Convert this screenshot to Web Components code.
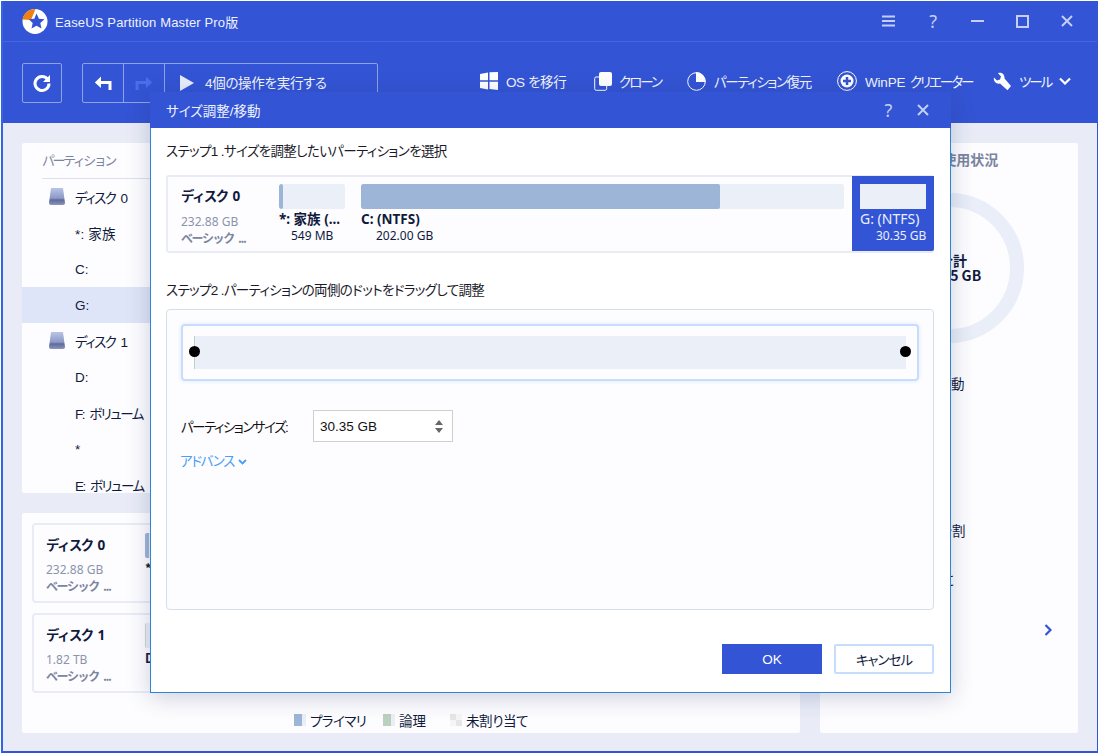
<!DOCTYPE html>
<html lang="ja"><head><meta charset="utf-8"><title>EaseUS</title>
<style>
html,body{margin:0;padding:0;background:#fff;width:1098px;height:754px;overflow:hidden;font-family:"Liberation Sans","Noto Sans CJK JP",sans-serif;font-size:13px;color:#101a3c}
</style></head><body>
<x-app>
  <x-titlebar></x-titlebar>
  <x-toolbar></x-toolbar>
  <x-main></x-main>
  <x-dialog></x-dialog>
</x-app>
<script>
const FONT='"Liberation Sans","Noto Sans CJK JP",sans-serif';
const UI='"Noto Sans","Noto Sans CJK JP",sans-serif';
function def(name,html,init){
  customElements.define(name,class extends HTMLElement{
    constructor(){super();this.attachShadow({mode:'open'});}
    connectedCallback(){const h=typeof html==='function'?html(this):html;this.shadowRoot.innerHTML=h+'<style>:host,*{font-feature-settings:"palt"}</style>';if(init)init(this);}
  });
}
def('x-app',`<style>:host{display:flex;flex-direction:column;position:relative;box-sizing:border-box;margin:1px 0 0 1px;width:1097px;height:752px;border-left:2px solid #3266e0;border-right:1px solid #3354d4;border-bottom:2px solid #3354d4;background:#e9ecf7;overflow:hidden}</style><slot></slot>`);

def('x-titlebar',`<style>
:host{display:flex;align-items:center;height:40px;background:#3354d4;border-bottom:1px solid #4168e2;box-sizing:content-box;padding-left:18px;color:#fff;font:13px ${FONT}}
svg.logo{width:27px;height:26px;margin-right:7px;flex:none}
.t{flex:1;letter-spacing:.15px;color:#eef2ff}
.w{display:flex;align-items:center;margin-right:8px}
.w span{width:44.5px;height:20px;display:flex;justify-content:center;align-items:center}
.q{font:18px ${UI};color:#c3cff3}
</style>
<svg class="logo" viewBox="0 0 27 26"><circle cx="14" cy="13.5" r="12.5" fill="#fff"/><path d="M14.5 1.1A12.5 12.5 0 0 0 1.500 11.500L10 12 Z" fill="#f0800f"/><path d="M15.500 5.500l2.400 5.200 5.600.6-4.200 3.800 1.200 5.500-5-2.900-5 2.900 1.200-5.500-4-3.800 5.600-.6z" fill="#3354d4"/></svg>
<div class="t">EaseUS Partition Master Pro版</div>
<div class="w">
<span><svg width="13" height="12" viewBox="0 0 13 12"><path d="M0 1.500h13M0 6h13M0 10.500h13" stroke="#c3cff3" stroke-width="2"/></svg></span>
<span class="q">?</span>
<span><svg width="13" height="2" viewBox="0 0 13 2"><path d="M0 1h13" stroke="#c3cff3" stroke-width="2"/></svg></span>
<span><svg width="13" height="13" viewBox="0 0 13 13"><rect x="1" y="1" width="11" height="11" fill="none" stroke="#c3cff3" stroke-width="2"/></svg></span>
<span><svg width="12" height="12" viewBox="0 0 12 12"><path d="M1 1l10 10M11 1L1 11" stroke="#c3cff3" stroke-width="2"/></svg></span>
</div>`);

def('x-toolbar',`<style>
:host{display:flex;align-items:flex-start;height:81px;background:#3354d4;padding:21px 0 0 19px;box-sizing:border-box;color:#f2f5ff;font:13.500px ${FONT}}
.b{display:flex;align-items:center;justify-content:center;border:1px solid #8ea2e8;border-radius:2px;box-sizing:border-box;height:40px}
.ref{width:40px;margin-right:20px}
.grp{width:296px;justify-content:flex-start}
.cell{width:41px;height:100%;display:flex;align-items:center;justify-content:center;border-right:1px solid #8ea2e8;box-sizing:border-box}
.run{display:flex;align-items:center;padding-left:15px;margin-top:-3px;letter-spacing:-.3px}
.run svg{margin-right:11px;margin-top:2px}
.r{position:relative;margin-left:102px;display:flex;align-items:center;height:40px;margin-top:-2px;letter-spacing:-1.4px}
.i{display:flex;align-items:center;white-space:nowrap}
.i svg{flex:none;margin-right:8px}
.pre{white-space:pre}
</style>
<div class="b ref"><svg width="20" height="20" viewBox="0 0 20 20"><path d="M15.500 6.200A7 7 0 1 0 17 10.500" fill="none" stroke="#fff" stroke-width="3"/><path d="M18 2v7h-7z" fill="#fff"/></svg></div>
<div class="b grp">
 <div class="cell"><svg width="18" height="18" viewBox="0 0 18 18"><path d="M16 16V8.500H4" fill="none" stroke="#fff" stroke-width="3"/><path d="M7 2.500L.8 8.500 7 14z" fill="#fff"/></svg></div>
 <div class="cell"><svg width="18" height="18" viewBox="0 0 18 18"><path d="M2 16V8.500H14" fill="none" stroke="#4a6fe8" stroke-width="3"/><path d="M11 2.500l6.200 6-6.200 5.500z" fill="#4a6fe8"/></svg></div>
 <div class="run"><svg width="14" height="16" viewBox="0 0 14 16"><path d="M0 0l14 8-14 8z" fill="#e8edfb"/></svg><span>4個の操作を実行する</span></div>
</div>
<div class="r">
 <div class="i" style="width:114px;letter-spacing:-.4px"><svg width="18" height="18" viewBox="0 0 18 18" style="margin-right:8px"><path d="M0 2l8-1.500V8.300H0zM9.500.3L18 0v8.300H9.500zM0 9.800h8v7.700L0 16zM9.500 9.800H18V18l-8.500-1z" fill="#fff"/></svg>OS を移行</div>
 <div class="i" style="width:93px;letter-spacing:-2px"><svg width="18" height="19" viewBox="0 0 18 19" style="margin-right:7px"><rect x=".7" y="5" width="12" height="13.300" rx="1.500" fill="none" stroke="#fff"/><rect x="5" y="0" width="13" height="14" rx="2" fill="#fff"/></svg>クローン</div>
 <div class="i" style="width:150px"><svg width="19" height="19" viewBox="0 0 19 19"><circle cx="9.500" cy="9.500" r="8.800" fill="none" stroke="#fff"/><path d="M9 0a9.500 9.500 0 0 1 9.500 10H9z" fill="#fff"/></svg>パーティション復元</div>
 <div class="i" style="width:156px"><svg width="20" height="20" viewBox="0 0 20 20"><circle cx="10" cy="10" r="9.400" fill="none" stroke="#fff"/><circle cx="10" cy="10" r="6.500" fill="#fff"/><path d="M10 6v8M6 10h8" stroke="#3354d4" stroke-width="2.500"/></svg><span class="pre"><span style="letter-spacing:-.2px;word-spacing:1px">WinPE </span><span style="letter-spacing:-2px">クリエーター</span></span></div>
 <div class="i" style="letter-spacing:-2px"><svg width="18" height="19" viewBox="0 0 18 19"><path d="M1 5.500L4 8.500 7 7.500 8 4.500 5 1.200C8 -.3 12 2 11.500 6.500L18 14l-3.500 4.300L7 11.500C3 12.500 0 9 1 5.500z" fill="#fff"/></svg>ツール<svg width="12" height="8" viewBox="0 0 12 8" style="margin:0 0 0 8px"><path d="M1 1.500l5 5 5-5" fill="none" stroke="#fff" stroke-width="2.200"/></svg></div>
</div>`);

def('x-disk-ic',`<style>:host{display:block;width:16px;height:18px;flex:none}</style><svg width="16" height="18" viewBox="0 0 16 18"><defs><linearGradient id="g" x1="0" y1="0" x2="0" y2="1"><stop offset="0" stop-color="#b9c4e6"/><stop offset=".6" stop-color="#8c99c6"/><stop offset=".7" stop-color="#5d6a9a"/><stop offset="1" stop-color="#8a96bf"/></linearGradient></defs><path d="M2 0h12l2 15a2 2 0 0 1-2 2H2a2 2 0 0 1-2-2z" fill="url(#g)"/></svg>`);

def('x-row',el=>`<style>
:host{display:flex;align-items:center;height:36px;box-sizing:border-box;padding-left:53px;font:13.500px ${FONT};color:#101a3c;white-space:nowrap;position:relative;letter-spacing:-1.5px;word-spacing:3px}
:host([sel]){background:#dfe5f8}
:host([disk]){padding-left:27px}
x-disk-ic{margin-right:10px}
</style>${el.hasAttribute('disk')?'<x-disk-ic></x-disk-ic>':''}<slot></slot>`);

def('x-list',`<style>
:host{display:block;height:350px;background:#fdfdff;overflow:hidden;border-radius:2px}
.h{margin-left:20px;height:36px;box-sizing:border-box;border-bottom:1px solid #dde0ee;font:13px/35px ${FONT};color:#7c849e;letter-spacing:-2.5px}
</style>
<div class="h">パーティション</div>
<x-row disk>ディスク 0</x-row><x-row style="letter-spacing:.2px;word-spacing:0">*: 家族</x-row><x-row style="letter-spacing:0">C:</x-row><x-row sel style="letter-spacing:0">G:</x-row>
<x-row disk>ディスク 1</x-row><x-row style="letter-spacing:0">D:</x-row><x-row>F: ボリューム</x-row><x-row>*</x-row><x-row>E: ボリューム</x-row>`);

def('x-disk-card',el=>`<style>
:host{display:flex;box-sizing:border-box;height:80px;width:760px;border:2px solid #e9ecf7;border-radius:4px;margin-bottom:10px;background:#fdfdff;padding:8px 0 0 12px}
.l{width:99px}
.n{font:700 13.500px/24px ${UI};color:#101a3c;margin-bottom:5px;letter-spacing:-1.6px;word-spacing:3px}
.s{font:12px/16px ${UI};color:#8b93ad}
.k{font:700 12px/16px "Noto Sans CJK JP",${UI};color:#7c849e;letter-spacing:-1.4px;word-spacing:3px}
.b{width:60px}
.bar{height:25px;background:#ebeff8;border-radius:2px;overflow:hidden;border-left:${el.getAttribute('c')?'1px solid #cfd6cf':'0'}}
.f{width:4px;height:100%;background:${el.getAttribute('f')||'#9db5d6'}}
.t{font:700 12.500px/18px "Noto Sans CJK JP",${UI};color:#101a3c;white-space:nowrap;margin-top:1px}
</style><div class="l"><div class="n">${el.getAttribute('n')}</div><div class="s">${el.getAttribute('s')}</div><div class="k">ベーシック ...</div></div>
<div class="b"><div class="bar"><div class="f"></div></div><div class="t">${el.getAttribute('t')}</div></div>`);

def('x-legend',`<style>
:host{display:flex;align-items:center;height:34px;font:13.500px ${FONT};color:#101a3c;padding-left:262px}
.k{display:flex;align-items:center;white-space:nowrap}
.s{width:12px;height:12px;margin-right:4px;background:linear-gradient(90deg,var(--c) 66%,#e9eef8 66%)}
.u{background:conic-gradient(#f5f5f5 25%,#e6e6e6 0 50%,#f5f5f5 0 75%,#e6e6e6 0)}
</style>
<div class="k" style="width:89px;letter-spacing:-.6px"><div class="s" style="--c:#9db5d6"></div>プライマリ</div>
<div class="k" style="width:67px"><div class="s" style="--c:#b9d1bd"></div>論理</div>
<div class="k" style="letter-spacing:-.4px"><div class="s u"></div>未割り当て</div>`);

def('x-actions',`<style>
:host{display:block;background:#fdfdff;height:590px;border-radius:2px;position:relative;font:13.500px ${FONT};color:#101a3c}
.h{text-align:center;font:700 14px/33px "Noto Sans CJK JP",${UI};color:#7a84a0;padding:0 0 0 14px}
.ring{box-sizing:border-box;width:150px;height:150px;border:14px solid #e9eef8;border-radius:50%;margin:17px auto 0;display:flex;flex-direction:column;align-items:center;justify-content:center;font:700 14px/15px "Noto Sans CJK JP",${UI};padding:0 0 0 4px}
.ring div:first-child{padding-left:4px}
ul{list-style:none;margin:32px 0 0;padding:0 0 0 50px}
li{height:49px;line-height:20px;white-space:nowrap}
.a{display:flex;justify-content:flex-end;padding:0 26px 0 0;margin-top:4px}
</style>
<div class="h">G:の使用状況</div>
<div class="ring"><div>合計</div><div>30.35 GB</div></div>
<ul><li>サイズ調整/移動</li><li>クローン</li><li>結合</li><li style="margin-left:-14px">パーティション分割</li><li>非アクティブに</li></ul>
<div class="a"><svg width="8" height="12" viewBox="0 0 8 12"><path d="M1.500 1l5 5-5 5" fill="none" stroke="#3354d4" stroke-width="2.200"/></svg></div>`);

def('x-main',`<style>
:host{display:grid;grid-template-columns:778px 258px;column-gap:20px;padding:20px 0 0 19px;flex:1;min-height:0}
.c{display:flex;flex-direction:column;gap:20px}
.p{background:#fdfdff;height:220px;border-radius:2px;padding:10px 0 0 10px;box-sizing:border-box;overflow:hidden}
</style>
<div class="c"><x-list></x-list>
<div class="p">
<x-disk-card n="ディスク 0" s="232.88 GB" t="*: 家族"></x-disk-card>
<x-disk-card n="ディスク 1" s="1.82 TB" t="D: ボリューム" f="#ebeff8" c="1"></x-disk-card>
<x-legend></x-legend>
</div></div>
<x-actions></x-actions>`);

def('x-part',el=>{
 const w=el.getAttribute('w'),f=el.getAttribute('f')||0,p=el.getAttribute('p')||15;
 return `<style>
:host{display:block;box-sizing:border-box;width:${w}px;flex:none;padding-top:7px;white-space:nowrap;font-family:${UI};color:#101a3c}
:host([sel]){background:#3354d4;color:#fff;padding:8px 8px 0;margin-top:-1px;margin-bottom:0;height:75px;width:82px;border-radius:0 0 2px 0}
.b{height:25px;background:#ebeff8;border-radius:2px;overflow:hidden}
:host([sel]) .b{border-radius:0}
.f{height:100%;width:${f}px;background:#9db5d6;border-radius:2px}
.n{font:700 13.500px/18px "Noto Sans","Noto Sans CJK JP",sans-serif;margin-top:1px;overflow:hidden}
.s{font:12px/16px ${UI};padding-left:${p}px}
:host([sel]) .n{font-weight:400;font-size:14px;color:#eaf0ff}
:host([sel]) .s{color:#eaf0ff}
</style><div class="b"><div class="f"></div></div><div class="n"><slot></slot></div><div class="s">${el.getAttribute('s')}</div>`});

def('x-disk-row',`<style>
:host{display:flex;box-sizing:border-box;height:78px;border:2px solid #e9ecf7;border-radius:3px;background:#fdfdff;margin:13px 0 0}
.l{width:111px;flex:none;padding:8px 0 0 13px;box-sizing:border-box}
.n{font:700 13.500px/22px ${UI};color:#101a3c;margin-bottom:7px;letter-spacing:-1.6px;word-spacing:3px}
.s{font:12px/16px ${UI};color:#8b93ad}
.k{font:700 12px/15px "Noto Sans CJK JP",${UI};color:#7c849e;letter-spacing:-1.4px;word-spacing:3px}
.pts{display:flex;gap:16px;flex:1;margin-right:-2px}
x-part[sel]{margin-left:-8px}
</style><div class="l"><div class="n">ディスク 0</div><div class="s">232.88 GB</div><div class="k">ベーシック ...</div></div>
<div class="pts"><x-part w="66" f="4" p="12" s="549 MB">*: 家族 (...</x-part><x-part w="483" f="359" s="202.00 GB">C: (NTFS)</x-part><x-part sel w="82" p="16" s="30.35 GB">G: (NTFS)</x-part></div>`);

def('x-slider',`<style>
:host{display:block;box-sizing:border-box;height:57px;border:2px solid #c8dcfb;border-radius:4px;background:#fdfdff;box-shadow:0 0 4px #dbe8fd;padding:10px 11px;position:relative}
.t{height:33px;background:#ebeff8;position:relative;border-left:1px solid #bcd3bf}
.d{position:absolute;width:11px;height:11px;background:#000;border-radius:50%;top:10px}
.a{left:-6px}.z{right:-5px}
</style><div class="t"><div class="d a"></div><div class="d z"></div></div>`);

def('x-spin',`<style>
:host{display:flex;align-items:center;box-sizing:border-box;width:140px;height:32px;border:1px solid #cfcfcf;padding:0 9px 0 6px;font:13.500px ${FONT};color:#111;justify-content:space-between;background:#fff}
</style><span>30.35 GB</span><svg width="8" height="13" viewBox="0 0 8 13"><path d="M4 0l4 5H0zM4 13L0 8h8z" fill="#666"/></svg>`);

def('x-btn',el=>`<style>
:host{display:flex;align-items:center;justify-content:center;box-sizing:border-box;width:100px;height:30px;font:13.500px ${FONT};color:#101a3c;background:#fff;border:2px solid #c8dcfb;border-radius:2px;letter-spacing:-1px}
:host([primary]){background:#3354d4;color:#fff;border:0;border-radius:0;letter-spacing:0}
</style><slot></slot>`);

def('x-dialog',`<style>
:host{position:absolute;left:147px;top:91px;width:801px;height:601px;box-sizing:border-box;background:#fff;border:1px solid #2b86d6;border-top:0;box-shadow:0 4px 22px rgba(30,40,90,.22);display:flex;flex-direction:column;font:13.500px ${FONT};color:#1a1a2a}
.tb{height:36px;flex:none;margin:0 -1px;background:#3354d4;color:#f0f3ff;display:flex;align-items:center;padding-left:16px}
.tb .t{flex:1;margin-top:-1px}
.tb span{font:18px ${UI};color:#c3cff3;margin-right:17px;display:flex;width:17px;justify-content:center;position:relative;left:-3px}
.body{padding:14px 16px 0 15px;flex:1;display:flex;flex-direction:column}
.st{height:20px;line-height:20px;letter-spacing:-.65px}
.box{height:301px;box-sizing:border-box;margin-top:8px;border:1px solid #d5dfea;border-radius:4px;background:#fdfdff;padding:14px 14px 0}
.f{display:flex;align-items:center;margin-top:29px}
.f label{width:132px;color:#111;white-space:nowrap;letter-spacing:-1.5px}
.adv{color:#4a9df8;margin-top:11px;line-height:18px;display:flex;align-items:center;margin-left:-1px;letter-spacing:-1.3px}
.adv svg{margin-left:4px}
.ft{display:flex;justify-content:flex-end;gap:12px;margin-top:34px}
</style>
<div class="tb"><div class="t">サイズ調整/移動</div><span>?</span><span><svg width="12" height="12" viewBox="0 0 12 12"><path d="M1 1l10 10M11 1L1 11" stroke="#c3cff3" stroke-width="2"/></svg></span></div>
<div class="body">
<div class="st">ステップ1 .サイズを調整したいパーティションを選択</div>
<x-disk-row></x-disk-row>
<div class="st" style="margin-top:28px">ステップ2 .パーティションの両側のドットをドラッグして調整</div>
<div class="box"><x-slider></x-slider>
<div class="f"><label>パーティションサイズ:</label><x-spin></x-spin></div>
<div class="adv">アドバンス<svg width="9" height="6" viewBox="0 0 9 6"><path d="M1 1l3.500 3.500L8 1" fill="none" stroke="#4a9df8" stroke-width="1.800"/></svg></div>
</div>
<div class="ft"><x-btn primary>OK</x-btn><x-btn>キャンセル</x-btn></div>
</div>`);
</script>
</body></html>
